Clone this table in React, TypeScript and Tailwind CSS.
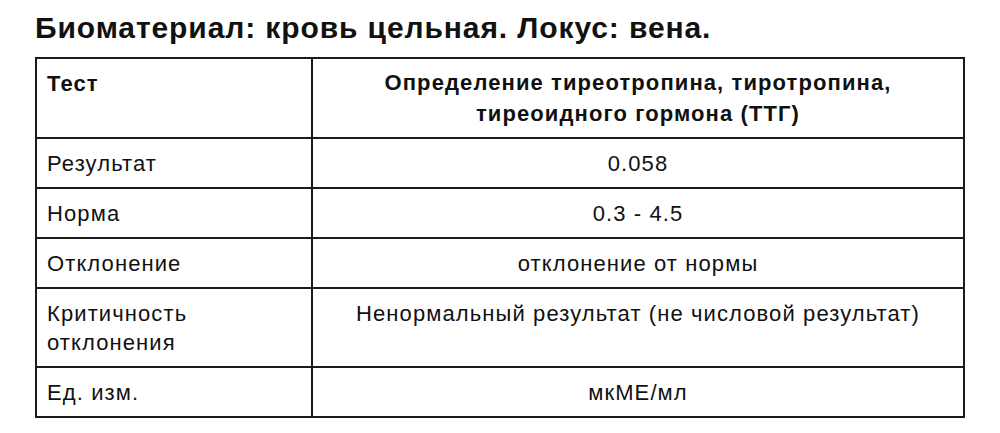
const rows: { label: string; value: string }[] = [
  { label: "Результат", value: "0.058" },
  { label: "Норма", value: "0.3 - 4.5" },
  { label: "Отклонение", value: "отклонение от нормы" },
  { label: "Критичность отклонения", value: "Ненормальный результат (не числовой результат)" },
  { label: "Ед. изм.", value: "мкМЕ/мл" },
]

export default function App() {
  return (
    <div className="min-h-screen bg-white px-[35px] pt-[10px] font-['Liberation_Sans',Arial,sans-serif] text-[#111]">
      <h1 className="h-[47px] text-[30px] font-bold leading-[36px] tracking-[0.9px]">
        Биоматериал: кровь цельная. Локус: вена.
      </h1>
      <table className="w-[930px] table-fixed border-collapse text-[22px] leading-[29px] tracking-[1.1px]">
        <colgroup>
          <col className="w-[276px]" />
          <col />
        </colgroup>
        <thead>
          <tr>
            <th className="border-2 border-[#1a1a1a] px-[10px] pt-[10px] pb-[8px] text-left align-top font-bold">
              Тест
            </th>
            <th className="border-2 border-[#1a1a1a] px-[10px] pt-[8px] pb-[8px] text-center align-top font-bold leading-[31px]">
              Определение тиреотропина, тиротропина,
              <br />
              тиреоидного гормона (ТТГ)
            </th>
          </tr>
        </thead>
        <tbody>
          {rows.map((row) => (
            <tr key={row.label}>
              <td className="border-2 border-[#1a1a1a] px-[10px] pt-[10px] pb-[9px] pr-[60px] align-top">
                {row.label}
              </td>
              <td className="border-2 border-[#1a1a1a] px-[10px] pt-[10px] pb-[9px] text-center align-top">
                {row.value}
              </td>
            </tr>
          ))}
        </tbody>
      </table>
    </div>
  )
}
